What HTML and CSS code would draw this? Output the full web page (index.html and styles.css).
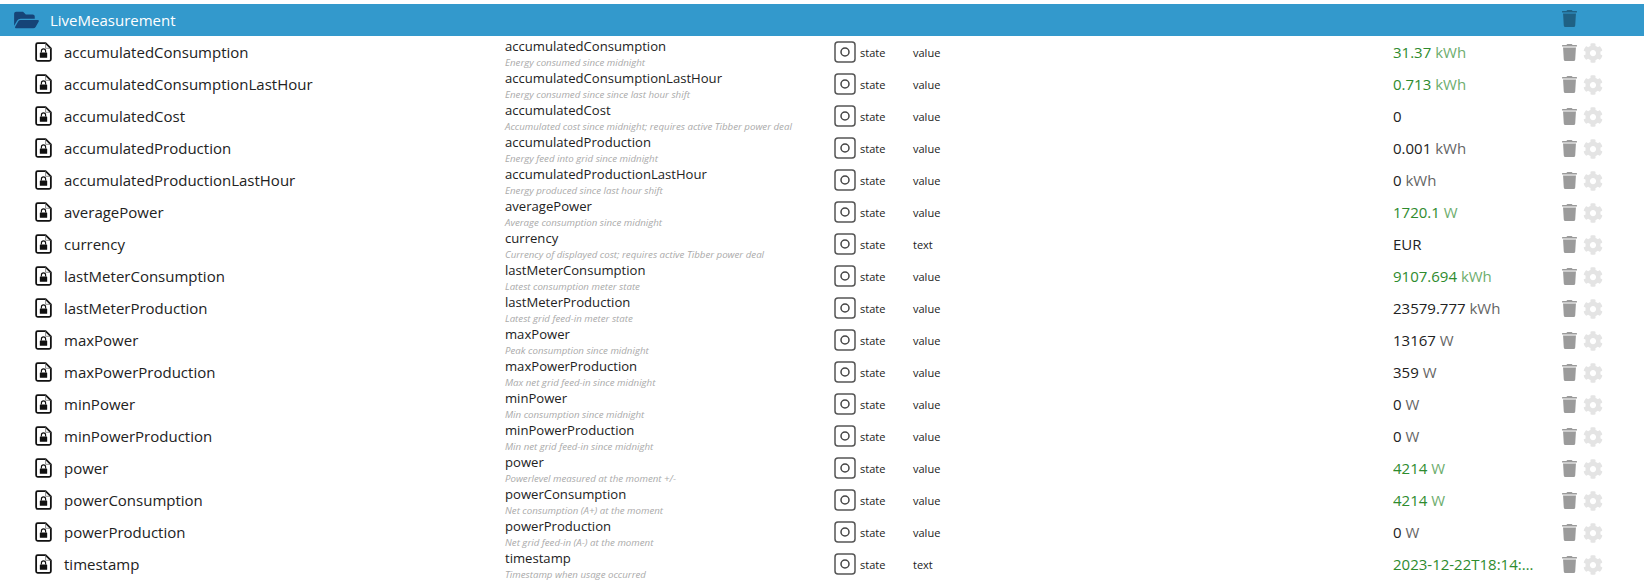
FILE: index.html
```html
<!DOCTYPE html>
<html lang="en">
<head>
<meta charset="utf-8">
<title>LiveMeasurement</title>
<link rel="stylesheet" href="styles.css">
</head>
<body>
<svg class="defs" width="0" height="0" aria-hidden="true">
  <symbol id="i-folder" viewBox="0 0 576 512"><path d="M572.694 292.093L500.27 416.248A63.997 63.997 0 0 1 444.989 448H45.025c-18.523 0-30.064-20.093-20.731-36.093l72.424-124.155A64 64 0 0 1 152 256h399.964c18.523 0 30.064 20.093 20.73 36.093zM152 224h328v-48c0-26.51-21.49-48-48-48H272l-64-64H48C21.49 64 0 85.49 0 112v278.046l69.077-118.418C86.214 242.25 117.989 224 152 224z"/></symbol>
  <symbol id="i-trash" viewBox="0 0 448 512"><path d="M432 32H312l-9.4-18.7A24 24 0 0 0 281.1 0H166.8a23.72 23.72 0 0 0-21.4 13.3L136 32H16A16 16 0 0 0 0 48v16a16 16 0 0 0 16 16h416a16 16 0 0 0 16-16V48a16 16 0 0 0-16-16zM53.2 467a48 48 0 0 0 47.9 45h245.8a48 48 0 0 0 47.9-45L416 104H32z"/></symbol>
  <symbol id="i-gear" viewBox="0 0 512 512"><path d="M487.4 315.7l-42.6-24.6c4.3-23.2 4.3-47 0-70.2l42.6-24.6c4.9-2.8 7.1-8.6 5.5-14-11.1-35.6-30-67.8-54.7-94.6-3.8-4.1-10-5.1-14.8-2.3L380.8 110c-17.9-15.4-38.5-27.3-60.8-35.1V25.8c0-5.6-3.9-10.5-9.4-11.7-36.7-8.2-74.3-7.8-109.2 0-5.5 1.2-9.4 6.1-9.4 11.7V75c-22.2 7.9-42.8 19.8-60.8 35.1L88.7 85.5c-4.9-2.8-11-1.9-14.8 2.3-24.7 26.7-43.6 58.9-54.7 94.6-1.7 5.4.6 11.2 5.5 14L67.3 221c-4.3 23.2-4.3 47 0 70.2l-42.6 24.6c-4.9 2.8-7.1 8.6-5.5 14 11.1 35.6 30 67.8 54.7 94.6 3.8 4.1 10 5.1 14.8 2.3l42.6-24.6c17.9 15.4 38.5 27.3 60.8 35.1v49.2c0 5.6 3.9 10.5 9.4 11.7 36.7 8.2 74.3 7.8 109.2 0 5.5-1.2 9.4-6.1 9.4-11.7v-49.2c22.2-7.9 42.8-19.8 60.8-35.1l42.6 24.6c4.9 2.8 11 1.9 14.8-2.3 24.7-26.7 43.6-58.9 54.7-94.6 1.5-5.5-.7-11.3-5.6-14.1zM256 336c-44.1 0-80-35.9-80-80s35.9-80 80-80 80 35.9 80 80-35.9 80-80 80z"/></symbol>
  <symbol id="i-file" viewBox="0 0 16 19">
    <path d="M2.500 1h7.500l5 5v10.500a1.500 1.500 0 0 1-1.500 1.500h-11a1.500 1.500 0 0 1-1.500-1.500v-14a1.500 1.500 0 0 1 1.500-1.500z" fill="none" stroke="#111" stroke-width="1.700" stroke-linejoin="round"/>
    <path d="M10 1v5h5" fill="none" stroke="#666" stroke-width="0.700"/>
    <path d="M5 10h6a.5.5 0 0 1 .5.5v4a.5.5 0 0 1-.5.5H5a.5.5 0 0 1-.5-.5v-4a.5.5 0 0 1 .5-.5z" fill="#111"/>
    <path d="M6 10V8.500a2 2 0 0 1 4 0V10" fill="none" stroke="#111" stroke-width="1.100"/>
  </symbol>
  <symbol id="i-state" viewBox="0 0 22 22">
    <rect x="1" y="1" width="20" height="20" rx="3" fill="none" stroke="#555" stroke-width="1.500"/>
    <circle cx="11" cy="11" r="4" fill="none" stroke="#444" stroke-width="1.500"/>
  </symbol>
</svg>

<main class="tree">
  <div class="folder">
    <svg class="folder-icon"><use href="#i-folder"/></svg>
    <span class="folder-name">LiveMeasurement</span>
    <svg class="trash trash-head"><use href="#i-trash"/></svg>
  </div>

  <div class="row"><svg class="file"><use href="#i-file"/></svg><span class="id">accumulatedConsumption</span><div class="info"><div class="title">accumulatedConsumption</div><div class="desc">Energy consumed since midnight</div></div><svg class="state"><use href="#i-state"/></svg><span class="small">state</span><span class="small">value</span><span class="val ok">31.37 <span class="unit">kWh</span></span><svg class="trash"><use href="#i-trash"/></svg><svg class="gear"><use href="#i-gear"/></svg></div>

  <div class="row"><svg class="file"><use href="#i-file"/></svg><span class="id">accumulatedConsumptionLastHour</span><div class="info"><div class="title">accumulatedConsumptionLastHour</div><div class="desc">Energy consumed since since last hour shift</div></div><svg class="state"><use href="#i-state"/></svg><span class="small">state</span><span class="small">value</span><span class="val ok">0.713 <span class="unit">kWh</span></span><svg class="trash"><use href="#i-trash"/></svg><svg class="gear"><use href="#i-gear"/></svg></div>

  <div class="row"><svg class="file"><use href="#i-file"/></svg><span class="id">accumulatedCost</span><div class="info"><div class="title">accumulatedCost</div><div class="desc">Accumulated cost since midnight; requires active Tibber power deal</div></div><svg class="state"><use href="#i-state"/></svg><span class="small">state</span><span class="small">value</span><span class="val">0</span><svg class="trash"><use href="#i-trash"/></svg><svg class="gear"><use href="#i-gear"/></svg></div>

  <div class="row"><svg class="file"><use href="#i-file"/></svg><span class="id">accumulatedProduction</span><div class="info"><div class="title">accumulatedProduction</div><div class="desc">Energy feed into grid since midnight</div></div><svg class="state"><use href="#i-state"/></svg><span class="small">state</span><span class="small">value</span><span class="val">0.001 <span class="unit">kWh</span></span><svg class="trash"><use href="#i-trash"/></svg><svg class="gear"><use href="#i-gear"/></svg></div>

  <div class="row"><svg class="file"><use href="#i-file"/></svg><span class="id">accumulatedProductionLastHour</span><div class="info"><div class="title">accumulatedProductionLastHour</div><div class="desc">Energy produced since last hour shift</div></div><svg class="state"><use href="#i-state"/></svg><span class="small">state</span><span class="small">value</span><span class="val">0 <span class="unit">kWh</span></span><svg class="trash"><use href="#i-trash"/></svg><svg class="gear"><use href="#i-gear"/></svg></div>

  <div class="row"><svg class="file"><use href="#i-file"/></svg><span class="id">averagePower</span><div class="info"><div class="title">averagePower</div><div class="desc">Average consumption since midnight</div></div><svg class="state"><use href="#i-state"/></svg><span class="small">state</span><span class="small">value</span><span class="val ok">1720.1 <span class="unit">W</span></span><svg class="trash"><use href="#i-trash"/></svg><svg class="gear"><use href="#i-gear"/></svg></div>

  <div class="row"><svg class="file"><use href="#i-file"/></svg><span class="id">currency</span><div class="info"><div class="title">currency</div><div class="desc">Currency of displayed cost; requires active Tibber power deal</div></div><svg class="state"><use href="#i-state"/></svg><span class="small">state</span><span class="small">text</span><span class="val">EUR</span><svg class="trash"><use href="#i-trash"/></svg><svg class="gear"><use href="#i-gear"/></svg></div>

  <div class="row"><svg class="file"><use href="#i-file"/></svg><span class="id">lastMeterConsumption</span><div class="info"><div class="title">lastMeterConsumption</div><div class="desc">Latest consumption meter state</div></div><svg class="state"><use href="#i-state"/></svg><span class="small">state</span><span class="small">value</span><span class="val ok">9107.694 <span class="unit">kWh</span></span><svg class="trash"><use href="#i-trash"/></svg><svg class="gear"><use href="#i-gear"/></svg></div>

  <div class="row"><svg class="file"><use href="#i-file"/></svg><span class="id">lastMeterProduction</span><div class="info"><div class="title">lastMeterProduction</div><div class="desc">Latest grid feed-in meter state</div></div><svg class="state"><use href="#i-state"/></svg><span class="small">state</span><span class="small">value</span><span class="val">23579.777 <span class="unit">kWh</span></span><svg class="trash"><use href="#i-trash"/></svg><svg class="gear"><use href="#i-gear"/></svg></div>

  <div class="row"><svg class="file"><use href="#i-file"/></svg><span class="id">maxPower</span><div class="info"><div class="title">maxPower</div><div class="desc">Peak consumption since midnight</div></div><svg class="state"><use href="#i-state"/></svg><span class="small">state</span><span class="small">value</span><span class="val">13167 <span class="unit">W</span></span><svg class="trash"><use href="#i-trash"/></svg><svg class="gear"><use href="#i-gear"/></svg></div>

  <div class="row"><svg class="file"><use href="#i-file"/></svg><span class="id">maxPowerProduction</span><div class="info"><div class="title">maxPowerProduction</div><div class="desc">Max net grid feed-in since midnight</div></div><svg class="state"><use href="#i-state"/></svg><span class="small">state</span><span class="small">value</span><span class="val">359 <span class="unit">W</span></span><svg class="trash"><use href="#i-trash"/></svg><svg class="gear"><use href="#i-gear"/></svg></div>

  <div class="row"><svg class="file"><use href="#i-file"/></svg><span class="id">minPower</span><div class="info"><div class="title">minPower</div><div class="desc">Min consumption since midnight</div></div><svg class="state"><use href="#i-state"/></svg><span class="small">state</span><span class="small">value</span><span class="val">0 <span class="unit">W</span></span><svg class="trash"><use href="#i-trash"/></svg><svg class="gear"><use href="#i-gear"/></svg></div>

  <div class="row"><svg class="file"><use href="#i-file"/></svg><span class="id">minPowerProduction</span><div class="info"><div class="title">minPowerProduction</div><div class="desc">Min net grid feed-in since midnight</div></div><svg class="state"><use href="#i-state"/></svg><span class="small">state</span><span class="small">value</span><span class="val">0 <span class="unit">W</span></span><svg class="trash"><use href="#i-trash"/></svg><svg class="gear"><use href="#i-gear"/></svg></div>

  <div class="row"><svg class="file"><use href="#i-file"/></svg><span class="id">power</span><div class="info"><div class="title">power</div><div class="desc">Powerlevel measured at the moment +/-</div></div><svg class="state"><use href="#i-state"/></svg><span class="small">state</span><span class="small">value</span><span class="val ok">4214 <span class="unit">W</span></span><svg class="trash"><use href="#i-trash"/></svg><svg class="gear"><use href="#i-gear"/></svg></div>

  <div class="row"><svg class="file"><use href="#i-file"/></svg><span class="id">powerConsumption</span><div class="info"><div class="title">powerConsumption</div><div class="desc">Net consumption (A+) at the moment</div></div><svg class="state"><use href="#i-state"/></svg><span class="small">state</span><span class="small">value</span><span class="val ok">4214 <span class="unit">W</span></span><svg class="trash"><use href="#i-trash"/></svg><svg class="gear"><use href="#i-gear"/></svg></div>

  <div class="row"><svg class="file"><use href="#i-file"/></svg><span class="id">powerProduction</span><div class="info"><div class="title">powerProduction</div><div class="desc">Net grid feed-in (A-) at the moment</div></div><svg class="state"><use href="#i-state"/></svg><span class="small">state</span><span class="small">value</span><span class="val">0 <span class="unit">W</span></span><svg class="trash"><use href="#i-trash"/></svg><svg class="gear"><use href="#i-gear"/></svg></div>

  <div class="row"><svg class="file"><use href="#i-file"/></svg><span class="id">timestamp</span><div class="info"><div class="title">timestamp</div><div class="desc">Timestamp when usage occurred</div></div><svg class="state"><use href="#i-state"/></svg><span class="small">state</span><span class="small">text</span><span class="val ok">2023-12-22T18:14:05.000+0100</span><svg class="trash"><use href="#i-trash"/></svg><svg class="gear"><use href="#i-gear"/></svg></div>
</main>
</body>
</html>
```
FILE: styles.css
```css
* { box-sizing: border-box; }
html, body { margin: 0; padding: 0; background: #fff; }
body {
  padding-top: 4px;
  height: 584px;
  overflow: hidden;
  font-family: "Open Sans", "Noto Sans", sans-serif;
  color: #222;
}
.defs { position: absolute; }

.folder {
  display: flex;
  align-items: center;
  height: 32px;
  padding-left: 14px;
  background: #3399cc;
}
.folder-icon { width: 25px; height: 22px; fill: #164477; }
.folder-name { margin-left: 11px; font-size: 15px; color: #fff; flex: 1; }
.folder .trash-head { fill: #1f6184; margin-right: 67px; margin-top: -3px; }

.row {
  display: grid;
  grid-template-columns: 28px 441px 329px 26px 53px 480px 169px 21px 1fr;
  grid-template-rows: 32px;
  align-items: center;
  height: 32px;
  padding-left: 36px;
}

.file { width: 17px; height: 20px; margin-left: -1px; }
.id { font-size: 15px; white-space: nowrap; }

.info { padding-top: 2px; }
.title { font-size: 13.1px; line-height: 17px; white-space: nowrap; }
.desc { font-size: 9.7px; line-height: 11px; margin-top: 2px; font-style: italic; color: #aaa; white-space: nowrap; }

.state { width: 22px; height: 22px; }
.small { font-size: 11px; }
.val {
  font-size: 15px;
  padding-right: 27px;
  white-space: nowrap;
  overflow: hidden;
  text-overflow: ellipsis;
}
.ok { color: #2e8b2e; }
.unit { opacity: 0.7; }

.trash { width: 15px; height: 19px; fill: #9b9b9b; margin-top: 1px; }
.gear { width: 20px; height: 20px; fill: #e4e4e4; margin-top: 1px; }
```
